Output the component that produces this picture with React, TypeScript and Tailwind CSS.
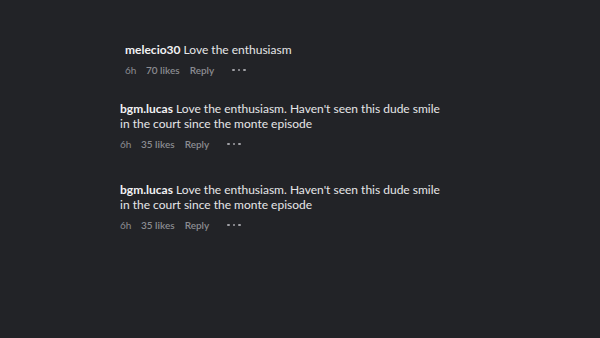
const font = { fontFamily: '"Lato", "Segoe UI", sans-serif' }

function Meta({ time, likes }: { time: string; likes: string }) {
  return (
    <div className="flex items-center text-[10px] leading-[14px] text-[#8b8c91]">
      <span className="w-[21px]">{time}</span>
      <span className="font-semibold">{likes}</span>
      <span className="ml-[10px] font-semibold">Reply</span>
      <span className="ml-[18px] flex items-center gap-[3px]">
        <span className="h-[2.5px] w-[2.5px] rounded-full bg-[#a0a1a6]" />
        <span className="h-[2.5px] w-[2.5px] rounded-full bg-[#a0a1a6]" />
        <span className="h-[2.5px] w-[2.5px] rounded-full bg-[#a0a1a6]" />
      </span>
    </div>
  )
}

function Comment({ user, text, likes, className }: { user: string; text: string; likes: string; className: string }) {
  return (
    <div className={className}>
      <p className="w-[326px] text-[12px] leading-[15px] text-[#e6e6e8]">
        <span className="font-bold text-[#f2f2f4]">{user}</span> {text}
      </p>
      <div className="mt-[6px]">
        <Meta time="6h" likes={likes} />
      </div>
    </div>
  )
}

export default function App() {
  const long = "Love the enthusiasm. Haven't seen this dude smile in the court since the monte episode"
  return (
    <div className="h-[338px] w-[600px] overflow-hidden bg-[#222327]" style={font}>
      <Comment className="pl-[125px] pt-[42px]" user="melecio30" text="Love the enthusiasm" likes="70 likes" />
      <Comment className="pl-[120px] pt-[24px]" user="bgm.lucas" text={long} likes="35 likes" />
      <Comment className="pl-[120px] pt-[31px]" user="bgm.lucas" text={long} likes="35 likes" />
    </div>
  )
}
